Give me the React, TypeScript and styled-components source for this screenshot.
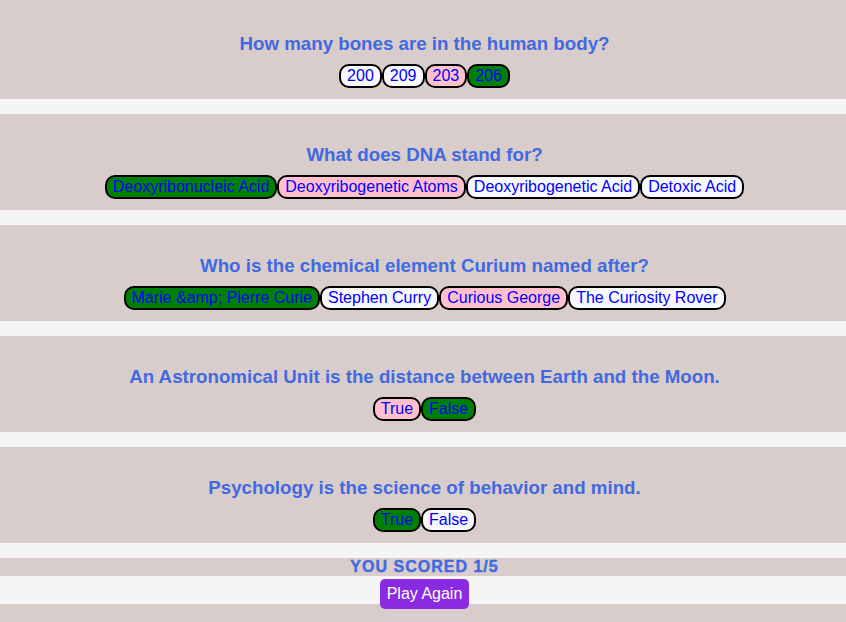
import React from "react";
import styled, { createGlobalStyle } from "styled-components";

const Global = createGlobalStyle`
  html, body { margin: 0; padding: 0; background: #d9cdcb; }
  body { font-family: "Liberation Sans", Arial, sans-serif; }
`;

type Status = "plain" | "wrong" | "right";

const bgFor: Record<Status, string> = {
  plain: "#f8f8ff",
  wrong: "#ffc0cb",
  right: "#008000",
};

const Page = styled.main`
  display: flex;
  flex-direction: column;
  min-height: 100vh;
  background: #d9cdcb;
`;

const Question = styled.section<{ $first?: boolean }>`
  display: flex;
  flex-direction: column;
  align-items: center;
  background: #d9cdcb;
  padding: ${(p) => (p.$first ? "33px" : "30px")} 0 11px 3px;
  border-bottom: 15px solid #f5f5f5;
`;

const Title = styled.h3`
  margin: 0 0 10px;
  font-size: 18.72px;
  line-height: 21px;
  font-weight: bold;
  color: #4169e1;
  text-align: center;
`;

const Options = styled.div`
  display: flex;
  justify-content: center;
  gap: 0;
`;

const Option = styled.button<{ $status: Status }>`
  font-family: "Liberation Sans", Arial, sans-serif;
  font-size: 16px;
  line-height: 18px;
  height: 24px;
  padding: 1px 6px;
  color: #0000ff;
  background: ${(p) => bgFor[p.$status]};
  border: 2px solid #000;
  border-radius: 10px;
  cursor: pointer;
`;

const Score = styled.h4`
  margin: 0;
  height: 18px;
  padding-left: 3px;
  font-size: 16px;
  line-height: 18px;
  font-weight: bold;
  letter-spacing: 1px;
  -webkit-text-stroke: 0.4px #4169e1;
  color: #4169e1;
  text-align: center;
  text-transform: uppercase;
  background: #d9cdcb;
`;

const Footer = styled.div`
  display: flex;
  justify-content: center;
  align-items: flex-start;
  height: 28px;
  padding-left: 3px;
  background: #f5f5f5;
`;

const PlayButton = styled.button`
  margin-top: 3px;
  height: 30px;
  padding: 0 7px;
  font-family: "Liberation Sans", Arial, sans-serif;
  font-size: 16px;
  color: #ffffff;
  background: #8a2be2;
  border: none;
  border-radius: 5px;
  cursor: pointer;
`;

const questions: { q: string; options: [string, Status][] }[] = [
  {
    q: "How many bones are in the human body?",
    options: [
      ["200", "plain"],
      ["209", "plain"],
      ["203", "wrong"],
      ["206", "right"],
    ],
  },
  {
    q: "What does DNA stand for?",
    options: [
      ["Deoxyribonucleic Acid", "right"],
      ["Deoxyribogenetic Atoms", "wrong"],
      ["Deoxyribogenetic Acid", "plain"],
      ["Detoxic Acid", "plain"],
    ],
  },
  {
    q: "Who is the chemical element Curium named after?",
    options: [
      ["Marie &amp; Pierre Curie", "right"],
      ["Stephen Curry", "plain"],
      ["Curious George", "wrong"],
      ["The Curiosity Rover", "plain"],
    ],
  },
  {
    q: "An Astronomical Unit is the distance between Earth and the Moon.",
    options: [
      ["True", "wrong"],
      ["False", "right"],
    ],
  },
  {
    q: "Psychology is the science of behavior and mind.",
    options: [
      ["True", "right"],
      ["False", "plain"],
    ],
  },
];

export default function App() {
  return (
    <Page>
      <Global />
      {questions.map((item, i) => (
        <Question key={i} $first={i === 0}>
          <Title>{item.q}</Title>
          <Options>
            {item.options.map(([label, status]) => (
              <Option key={label} $status={status}>
                {label}
              </Option>
            ))}
          </Options>
        </Question>
      ))}
      <Score>You scored 1/5</Score>
      <Footer>
        <PlayButton>Play Again</PlayButton>
      </Footer>
    </Page>
  );
}
